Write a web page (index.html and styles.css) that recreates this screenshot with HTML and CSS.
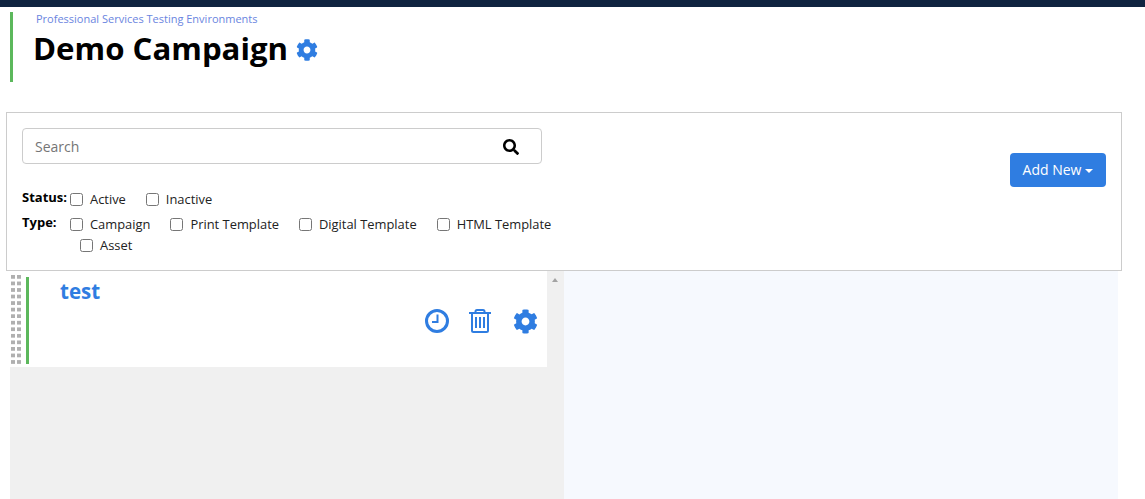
FILE: index.html
```html
<!DOCTYPE html>
<html lang="en">
<head>
<meta charset="utf-8">
<title>Demo Campaign</title>
<link rel="stylesheet" href="styles.css">
</head>
<body>
<div class="topbar"></div>
<header class="page-head">
  <a class="crumb">Professional Services Testing Environments</a>
  <h1 class="title">Demo Campaign
    <svg class="title-gear" viewBox="0 0 512 512"><path d="M487.4 315.7l-42.6-24.6c4.3-23.2 4.3-47 0-70.2l42.6-24.6c4.9-2.8 7.1-8.6 5.5-14-11.1-35.6-30-67.8-54.7-94.6-3.8-4.1-10-5.1-14.8-2.3L380.8 110c-17.9-15.4-38.5-27.3-60.8-35.1V25.8c0-5.6-3.9-10.5-9.4-11.7-36.7-8.2-74.3-7.8-109.2 0-5.5 1.2-9.4 6.1-9.4 11.7V75c-22.2 7.9-42.8 19.8-60.8 35.1L88.7 85.5c-4.9-2.8-11-1.9-14.8 2.3-24.7 26.7-43.6 58.9-54.7 94.6-1.7 5.4.6 11.2 5.5 14L67.3 221c-4.3 23.2-4.3 47 0 70.2l-42.6 24.6c-4.9 2.8-7.1 8.6-5.5 14 11.1 35.6 30 67.8 54.7 94.6 3.8 4.1 10 5.1 14.8 2.3l42.6-24.6c17.9 15.4 38.5 27.3 60.8 35.1v49.2c0 5.6 3.9 10.5 9.4 11.7 36.7 8.2 74.3 7.8 109.2 0 5.5-1.2 9.4-6.1 9.4-11.7v-49.2c22.2-7.9 42.8-19.8 60.8-35.1l42.6 24.6c4.9 2.8 11 1.9 14.8-2.3 24.7-26.7 43.6-58.9 54.7-94.6 1.5-5.5-.7-11.3-5.6-14.1zM256 336c-44.1 0-80-35.9-80-80s35.9-80 80-80 80 35.9 80 80-35.9 80-80 80z"/></svg>
  </h1>
</header>

<section class="filters">
  <div class="filter-main">
    <div class="search">
      <input class="search-input" type="text" placeholder="Search">
      <svg class="search-icon" viewBox="0 0 512 512"><path d="M505 442.7L405.3 343c-4.5-4.5-10.6-7-17-7H372c27.6-35.3 44-79.7 44-128C416 93.1 322.9 0 208 0S0 93.1 0 208s93.1 208 208 208c48.3 0 92.7-16.4 128-44v16.3c0 6.4 2.5 12.5 7 17l99.7 99.7c9.4 9.4 24.6 9.4 33.9 0l28.3-28.3c9.4-9.4 9.4-24.6.1-34zM208 336c-70.7 0-128-57.2-128-128 0-70.7 57.2-128 128-128 70.7 0 128 57.2 128 128 0 70.7-57.2 128-128 128z"/></svg>
    </div>
    <div class="filter-row status-row">
      <span class="filter-label">Status:</span>
      <div class="options">
        <label class="opt"><input type="checkbox">Active</label>
        <label class="opt"><input type="checkbox">Inactive</label>
      </div>
    </div>
    <div class="filter-row type-row">
      <span class="filter-label type-label">Type:</span>
      <div class="options">
        <label class="opt"><input type="checkbox">Campaign</label>
        <label class="opt"><input type="checkbox">Print Template</label>
        <label class="opt"><input type="checkbox">Digital Template</label>
        <label class="opt"><input type="checkbox">HTML Template</label>
        <label class="opt opt-wrap"><input type="checkbox">Asset</label>
      </div>
    </div>
  </div>
  <button class="add-btn" type="button">Add New<span class="caret"></span></button>
</section>

<main class="panes">
  <div class="list-pane">
    <div class="list-scroll">
      <article class="card">
        <div class="grip"></div>
        <div class="card-body">
          <h2 class="card-title">test</h2>
          <div class="card-actions">
            <svg class="act clock" viewBox="0 0 24 24"><circle cx="12" cy="12" r="10.5" fill="none" stroke-width="3"/><path d="M12.5 5.5v7.5H7" fill="none" stroke-width="2"/></svg>
            <svg class="act trash" viewBox="0 0 22 24"><path d="M0 4H22M6.5 4V2.5Q6.5 1 8 1H14Q15.5 1 15.5 2.5V4M3 4V21.5Q3 23 4.5 23H17.5Q19 23 19 21.5V4M7 8V19M11 8V19M15 8V19" fill="none" stroke-width="2"/></svg>
            <svg class="act gear" viewBox="0 0 512 512"><path d="M487.4 315.7l-42.6-24.6c4.3-23.2 4.3-47 0-70.2l42.6-24.6c4.9-2.8 7.1-8.6 5.5-14-11.1-35.6-30-67.8-54.7-94.6-3.8-4.1-10-5.1-14.8-2.3L380.8 110c-17.9-15.4-38.5-27.3-60.8-35.1V25.8c0-5.6-3.9-10.5-9.4-11.7-36.7-8.2-74.3-7.8-109.2 0-5.5 1.2-9.4 6.1-9.4 11.7V75c-22.2 7.9-42.8 19.8-60.8 35.1L88.7 85.5c-4.9-2.8-11-1.9-14.8 2.3-24.7 26.7-43.6 58.9-54.7 94.6-1.7 5.4.6 11.2 5.5 14L67.3 221c-4.3 23.2-4.3 47 0 70.2l-42.6 24.6c-4.9 2.8-7.1 8.6-5.5 14 11.1 35.6 30 67.8 54.7 94.6 3.8 4.1 10 5.1 14.8 2.3l42.6-24.6c17.9 15.4 38.5 27.3 60.8 35.1v49.2c0 5.6 3.9 10.5 9.4 11.7 36.7 8.2 74.3 7.8 109.2 0 5.5-1.2 9.4-6.1 9.4-11.7v-49.2c22.2-7.9 42.8-19.8 60.8-35.1l42.6 24.6c4.9 2.8 11 1.9 14.8-2.3 24.7-26.7 43.6-58.9 54.7-94.6 1.5-5.5-.7-11.3-5.6-14.1zM256 336c-44.1 0-80-35.9-80-80s35.9-80 80-80 80 35.9 80 80-35.9 80-80 80z"/></svg>
          </div>
        </div>
      </article>
    </div>
    <div class="scrollbar"><span class="scroll-up"></span></div>
  </div>
  <div class="detail-pane"></div>
</main>
</body>
</html>
```
FILE: styles.css
```css
* { box-sizing: border-box; }
html, body { height: 100%; }
body {
  margin: 0;
  height: 499px;
  overflow: hidden;
  background: #fff;
  color: #000;
  font-family: "Open Sans", sans-serif;
  font-size: 13px;
  display: flex;
  flex-direction: column;
}
.topbar { height: 7px; background: #0f2440; flex: none; }

.page-head {
  flex: none;
  margin: 5px 0 0 10px;
  height: 70px;
  border-left: 3px solid #5cb85c;
  padding-left: 23px;
}
.crumb {
  display: block;
  font-size: 11px;
  line-height: 14px;
  color: #6a85e0;
}
.title {
  margin: 1px 0 0 -3px;
  font-size: 31.2px;
  line-height: 42px;
  font-weight: 700;
  display: flex;
  align-items: center;
  gap: 8px;
}
.title-gear { width: 22px; height: 22px; fill: #2f7de1; margin-top: 4px; }

.filters {
  flex: none;
  margin: 30px 23px 0 6px;
  height: 159px;
  border: 1px solid #ccc;
  padding: 15px 15px 0;
  display: flex;
  justify-content: space-between;
  align-items: flex-start;
}
.filter-main { width: 540px; }
.search { width: 520px; height: 36px; position: relative; }
.search-input {
  width: 100%;
  height: 100%;
  border: 1px solid #ccc;
  border-radius: 4px;
  padding: 0 12px;
  font: 14px "Open Sans", sans-serif;
  color: #333;
  outline: none;
}
.search-input::placeholder { color: #757575; opacity: 1; }
.search-icon {
  position: absolute;
  right: 23px;
  top: 11px;
  width: 16px;
  height: 16px;
  fill: #000;
}
.filter-row { display: flex; width: 545px; }
.status-row { margin-top: 23px; height: 25px; }
.filter-label {
  flex: none;
  width: 48px;
  font-size: 13px;
  font-weight: 700;
  line-height: 21px;
}
.options { display: flex; flex-wrap: wrap; column-gap: 20px; padding-top: 2px; }
.opt {
  display: inline-flex;
  align-items: center;
  height: 21px;
  padding-bottom: 2px;
  font-size: 12.9px;
  color: #222;
}
.opt input { margin: 2px 7px 0 0; width: 13px; height: 13px; }
.opt-wrap { margin-left: 10px; }

.add-btn {
  margin: 25px 0 0;
  padding: 0 0 2px;
  width: 96px;
  height: 34px;
  border: 0;
  border-radius: 4px;
  background: #2f7de1;
  color: #fff;
  font: 14px "Open Sans", sans-serif;
  display: flex;
  align-items: center;
  justify-content: center;
}
.caret {
  margin-left: 4px;
  margin-top: 3px;
  border-top: 4px solid #fff;
  border-left: 4px solid transparent;
  border-right: 4px solid transparent;
}

.panes {
  flex: 1;
  min-height: 0;
  margin: 0 27px 0 10px;
  display: flex;
}
.list-pane {
  width: 554px;
  background: #f0f0f0;
  display: flex;
}
.list-scroll { width: 537px; }
.card {
  height: 96px;
  background: #fff;
  padding: 4px 0 2px;
  display: flex;
}
.grip {
  width: 10px;
  margin: 0 0 0 1px;
  flex: none;
  background: conic-gradient(from 270deg at 4px 4px, #b0b0b0 25%, transparent 0) 0 0 / 6px 6.55px;
}
.card-body {
  flex: 1;
  margin: 2px 0 1px 5px;
  border-left: 3px solid #5cb85c;
  position: relative;
}
.card-title {
  margin: 0 0 0 31px;
  font-size: 20.5px;
  line-height: 28px;
  font-weight: 700;
  color: #2f7de1;
}
.card-actions {
  position: absolute;
  right: 9px;
  top: 32px;
  display: flex;
  align-items: flex-start;
  gap: 21px;
}
.act { display: block; fill: #2f7de1; stroke: #2f7de1; }
.clock { width: 24px; height: 24px; margin-left: -0.5px; margin-right: 0.5px; }
.trash { width: 22px; height: 24px; margin-left: -1px; margin-right: 1px; }
.gear { width: 25px; height: 25px; stroke: none; }
.scrollbar { width: 17px; position: relative; }
.scroll-up {
  position: absolute;
  left: 5px;
  top: 7px;
  border-bottom: 4px solid #a3a3a3;
  border-left: 3.5px solid transparent;
  border-right: 3.5px solid transparent;
}
.detail-pane { flex: 1; background: #f6f9fe; }
```
